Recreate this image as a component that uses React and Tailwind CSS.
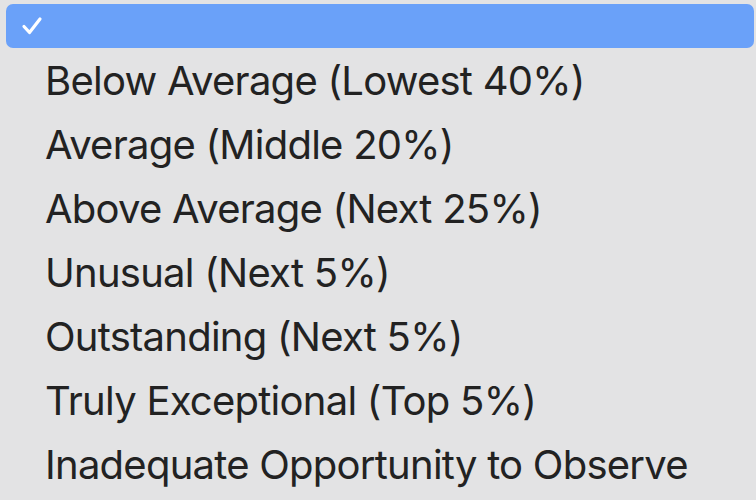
const options = [
  'Below Average (Lowest 40%)',
  'Average (Middle 20%)',
  'Above Average (Next 25%)',
  'Unusual (Next 5%)',
  'Outstanding (Next 5%)',
  'Truly Exceptional (Top 5%)',
  'Inadequate Opportunity to Observe',
];

const App = () => {
  return (
    <div
      className="w-[756px] h-[500px] bg-[#e3e3e4] overflow-hidden"
      style={{ fontFamily: 'Inter, "Noto Sans", sans-serif' }}
    >
      <div className="pl-[6px] pr-[2px] pt-[4px] pb-[1px]">
        <div className="h-[44px] rounded-[7px] bg-[#6aa1f9] flex items-center pl-[15px]">
          <svg width="22" height="20" viewBox="0 0 22 20" fill="none">
            <path
              d="M3 10.5 L8.5 16.5 L19 3"
              stroke="white"
              strokeWidth="3.2"
              strokeLinecap="round"
              strokeLinejoin="round"
            />
          </svg>
        </div>
      </div>
      <ul>
        {options.map((opt) => (
          <li
            key={opt}
            className="h-[64px] flex items-center pl-[45px] text-[40px] text-[#222222] tracking-[-0.75px] whitespace-nowrap"
          >
            {opt}
          </li>
        ))}
      </ul>
    </div>
  );
};

export default App;
